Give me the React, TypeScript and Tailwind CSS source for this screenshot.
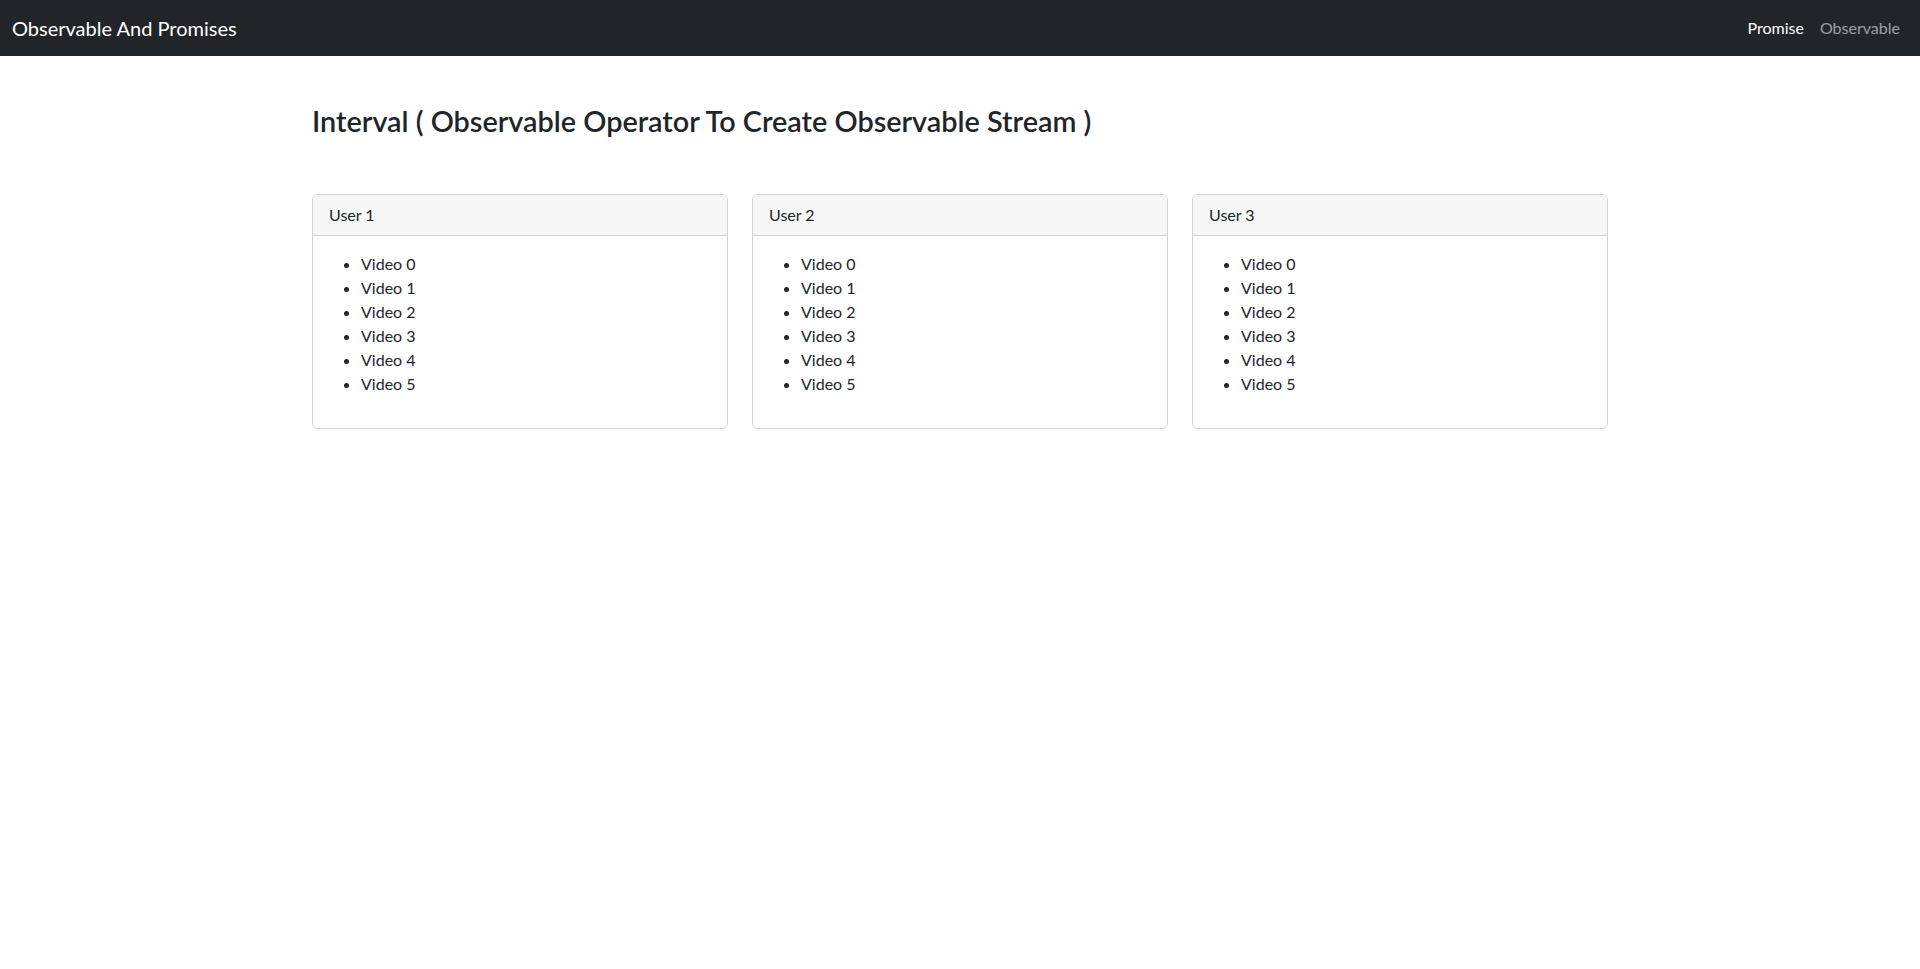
import React from "react";

const users = ["User 1", "User 2", "User 3"];
const videos = [0, 1, 2, 3, 4, 5];

export default function App() {
  return (
    <div className="min-h-screen bg-white text-[#212529] font-['Lato',sans-serif]">
      <nav className="flex h-14 items-center justify-between bg-[#212529] px-3">
        <a className="py-[5px] text-[20px] leading-[30px] text-white">Observable And Promises</a>
        <div className="flex items-center">
          <a className="px-2 text-[16px] leading-6 text-white">Promise</a>
          <a className="px-2 text-[16px] leading-6 text-white/55">Observable</a>
        </div>
      </nav>

      <main className="mx-auto w-[1320px] px-3 pt-12">
        <h3 className="text-[28.8px] font-semibold leading-[1.2]">
          Interval ( Observable Operator To Create Observable Stream )
        </h3>

        <div className="mt-[55px] grid grid-cols-3 gap-6">
          {users.map((u) => (
            <div key={u} className="overflow-hidden rounded-[6px] border border-[#d3d4d5] bg-white">
              <div className="border-b border-[#d3d4d5] bg-[#f7f7f7] px-4 py-2 text-[16px] leading-6">
                {u}
              </div>
              <div className="p-4">
                <ul className="mb-4 list-disc pl-8 text-[16px] leading-6">
                  {videos.map((v) => (
                    <li key={v}>Video {v}</li>
                  ))}
                </ul>
              </div>
            </div>
          ))}
        </div>
      </main>
    </div>
  );
}
